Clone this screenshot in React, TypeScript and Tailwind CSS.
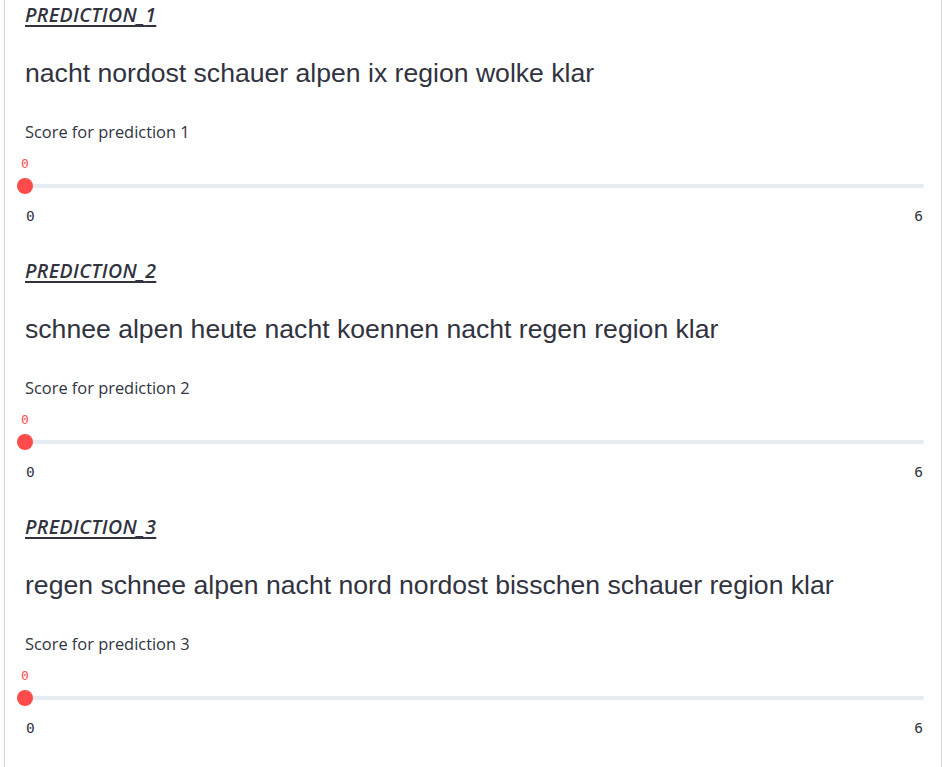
const predictions = [
  "nacht nordost schauer alpen ix region wolke klar",
  "schnee alpen heute nacht koennen nacht regen region klar",
  "regen schnee alpen nacht nord nordost bisschen schauer region klar",
];

function ScoreSlider({ label }: { label: string }) {
  return (
    <div>
      <div className="mt-[31px] h-[20px] text-[16.4px] leading-[20px] text-[#31333f] font-['Open_Sans',sans-serif]">
        {label}
      </div>
      <div className="mt-[14px] h-[16px] w-0 flex justify-center text-[13px] leading-[16px] text-[#ff4b4b] font-['DejaVu_Sans_Mono',monospace]">
        <span>0</span>
      </div>
      {/* track + thumb */}
      <div className="relative mt-[6px] h-[16px] flex items-center">
        <div className="h-[4px] w-full rounded-full bg-[#e6eaf1]" />
        <div className="absolute left-[-8px] top-0 h-[16px] w-[16px] rounded-full bg-[#ff4b4b]" />
      </div>
      <div className="mt-[12px] h-[20px] flex justify-between text-[14.5px] leading-[20px] text-[#31333f] font-['DejaVu_Sans_Mono',monospace]">
        <span className="pl-[1px]">0</span>
        <span className="pr-[1px]">6</span>
      </div>
    </div>
  );
}

export default function App() {
  return (
    <div className="min-h-[767px] bg-white">
      <div className="ml-[4px] w-[938px] min-h-[767px] border-x border-[#d6d6d9] pl-[20px] pr-[17px]">
        {predictions.map((text, i) => (
          <div key={i} className={i === 0 ? "" : "mt-[30px]"}>
            <div className="h-[28px] text-[19.5px] leading-[29px] font-semibold italic tracking-[0.4px] underline decoration-[1.5px] underline-offset-[3px] text-[#31333f] font-['Open_Sans',sans-serif]">
              PREDICTION_{i + 1}
            </div>
            <div className="mt-[27px] h-[36px] text-[26.6px] leading-[36px] text-[#31333f] font-['Liberation_Sans',Arial,sans-serif]">
              {text}
            </div>
            <ScoreSlider label={`Score for prediction ${i + 1}`} />
          </div>
        ))}
      </div>
    </div>
  );
}
